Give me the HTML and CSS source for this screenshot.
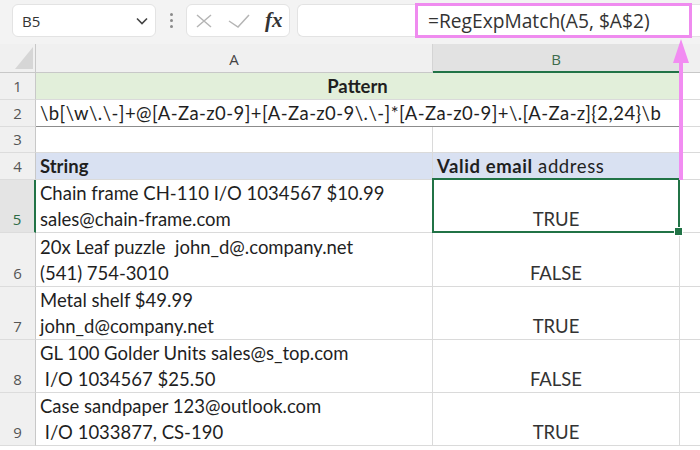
FILE: index.html
```html
<!DOCTYPE html>
<html lang="en">
<head>
    <meta charset="UTF-8">
    <title>RegExpMatch - Valid email</title>
    <link rel="stylesheet" href="styles.css">
</head>
<body>

<div class="toolbar">
    <div class="namebox">
        <span>B5</span>
        <svg width="12" height="8" viewBox="0 0 12 8"><path d="M1 1.5 L6 6.5 L11 1.5" fill="none" stroke="#444" stroke-width="1.6"/></svg>
    </div>
    <div class="grip"><i></i><i></i><i></i></div>
    <div class="fnbox">
        <svg width="18" height="14" viewBox="0 0 18 14"><path d="M2 1 L16 13 M16 1 L2 13" stroke="#b5b5b5" stroke-width="1.5" fill="none"/></svg>
        <svg width="22" height="14" viewBox="0 0 22 14"><path d="M1 7 L10 13 L21 1" stroke="#b5b5b5" stroke-width="1.5" fill="none"/></svg>
        <span class="fx">fx</span>
    </div>
    <div class="formula">
        <span class="formula-text">=RegExpMatch(A5, $A$2)</span>
    </div>
</div>

<div class="sheet">
    <!-- column headers -->
    <div class="corner"><svg width="18" height="22" viewBox="0 0 18 22"><polygon points="18,0 18,22 0,22" fill="#d6d6d6"/></svg></div>
    <div class="hdr">A</div>
    <div class="hdr hdr-sel">B</div>
    <div class="hdr hdr-c"></div>

    <!-- row 1 -->
    <div class="rh">1</div>
    <div class="c merged title">Pattern</div>
    <div class="c cc"></div>

    <!-- row 2 -->
    <div class="rh">2</div>
    <div class="c merged pattern">\b[\w\.\-]+@[A-Za-z0-9]+[A-Za-z0-9\.\-]*[A-Za-z0-9]+\.[A-Za-z]{2,24}\b</div>
    <div class="c cc"></div>

    <!-- row 3 -->
    <div class="rh">3</div>
    <div class="c"></div>
    <div class="c"></div>
    <div class="c cc"></div>

    <!-- row 4 -->
    <div class="rh">4</div>
    <div class="c head"><b>String</b></div>
    <div class="c head"><span><b>Valid email</b> address</span></div>
    <div class="c cc"></div>

    <!-- data rows -->
    <div class="rh rh-sel">5</div>
    <div class="c">Chain frame CH-110 I/O 1034567 $10.99<br>sales@chain-frame.com</div>
    <div class="c res sel">TRUE</div>
    <div class="c cc"></div>

    <div class="rh">6</div>
    <div class="c">20x Leaf puzzle&nbsp; john_d@.company.net<br>(541) 754-3010</div>
    <div class="c res">FALSE</div>
    <div class="c cc"></div>

    <div class="rh">7</div>
    <div class="c">Metal shelf $49.99<br>john_d@company.net</div>
    <div class="c res">TRUE</div>
    <div class="c cc"></div>

    <div class="rh">8</div>
    <div class="c">GL 100 Golder Units sales@s_top.com<br>&nbsp;I/O 1034567 $25.50</div>
    <div class="c res">FALSE</div>
    <div class="c cc"></div>

    <div class="rh">9</div>
    <div class="c">Case sandpaper 123@outlook.com<br>&nbsp;I/O 1033877, CS-190</div>
    <div class="c res">TRUE</div>
    <div class="c cc"></div>
</div>

<!-- callout arrow from the result column up to the formula -->
<svg class="arrow" width="18" height="144" viewBox="0 0 18 144">
    <polygon points="9,1 1,25 17,25" fill="#f28cf2"/>
    <rect x="7" y="24" width="4" height="118" fill="#f28cf2"/>
</svg>

</body>
</html>
```

FILE: styles.css
```css
* {
    box-sizing: border-box;
}

body {
    margin: 0;
    width: 700px;
    height: 450px;
    overflow: hidden;
    background: #fff;
    font-family: 'Lato', sans-serif;
    color: #1f1f1f;
    position: relative;
}

/* Formula bar */
.toolbar {
    height: 44px;
    background: #f3f3f3;
    display: flex;
    align-items: flex-start;
    padding: 4px 0 0 12px;
}

.namebox {
    width: 144px;
    height: 33px;
    background: #fff;
    border: 1px solid #e3e3e3;
    border-radius: 6px;
    display: flex;
    align-items: center;
    justify-content: space-between;
    padding: 0 7px 0 9px;
    font-family: 'Open Sans', sans-serif;
    font-size: 15px;
    color: #333;
}

.grip {
    width: 30px;
    height: 33px;
    display: flex;
    flex-direction: column;
    align-items: center;
    justify-content: center;
    gap: 3px;
}

.grip i {
    width: 3px;
    height: 3px;
    border-radius: 50%;
    background: #8a8a8a;
}

.fnbox {
    width: 104px;
    height: 33px;
    background: #fff;
    border: 1px solid #e3e3e3;
    border-radius: 6px;
    display: flex;
    align-items: center;
    gap: 15px;
    padding-left: 8px;
}

.fx {
    font-family: 'Liberation Serif', serif;
    font-style: italic;
    font-weight: bold;
    font-size: 21px;
    color: #333;
}

.formula {
    flex: 1;
    height: 33px;
    margin-left: 7px;
    background: #fff;
    border: 1px solid #e3e3e3;
    border-right: none;
    border-radius: 6px 0 0 6px;
    display: flex;
    justify-content: flex-end;
}

.formula-text {
    width: 277px;
    margin: -2px 8px -2px 0;
    border: 3px solid #ef8bef;
    padding-left: 10px;
    display: flex;
    align-items: center;
    font-family: 'Open Sans', sans-serif;
    font-size: 19.2px;
    color: #333;
}

/* Sheet grid */
.sheet {
    display: grid;
    grid-template-columns: 36px 397px 247px 20px;
    grid-template-rows: 29px 27px 27px 26px 27px 53px 54px 53px 53px 53px;
}

.corner {
    background: #f0f0f0;
    border-right: 1px solid #c8c8c8;
    border-bottom: 1px solid #c8c8c8;
    padding: 3px 0 0 15px;
}

.hdr {
    background: #f0f0f0;
    border-right: 1px solid #d4d4d4;
    border-bottom: 1px solid #c8c8c8;
    display: flex;
    align-items: center;
    justify-content: center;
    padding-top: 2px;
    font-family: 'Open Sans', sans-serif;
    font-size: 15px;
    color: #444;
}

.hdr-sel {
    background: #e2e2e2;
    color: #3d6b4c;
    border-bottom: 2px solid #217346;
}

.hdr-c {
    border-right: none;
}

.rh {
    background: #f0f0f0;
    border-right: 1px solid #c8c8c8;
    border-bottom: 1px solid #dcdcdc;
    display: flex;
    align-items: flex-end;
    justify-content: center;
    font-family: 'Open Sans', sans-serif;
    font-size: 15px;
    line-height: 26px;
    color: #555;
}

.rh-sel {
    background: #e4e4e4;
    color: #2d6b45;
    border-right: 2px solid #217346;
}

.c {
    border-right: 1px solid #dadada;
    border-bottom: 1px solid #dadada;
    display: flex;
    flex-direction: column;
    justify-content: flex-end;
    padding: 0 4px;
    font-size: 18.5px;
    line-height: 26px;
    white-space: nowrap;
}

.cc {
    border-right: none;
}

.merged {
    grid-column: span 2;
}

.title {
    background: #e2efda;
    align-items: center;
    font-weight: bold;
    border-right-color: #8f9a8f;
}

.pattern {
    letter-spacing: 0.45px;
    border-right-color: #8c8c8c;
    border-bottom-color: #8c8c8c;
}

.head {
    background: #d9e1f2;
}

.head span {
    letter-spacing: 0.6px;
}

.res {
    align-items: center;
    color: #333;
}

.sel {
    position: relative;
}

.sel::after {
    content: '';
    position: absolute;
    top: -2px;
    left: -1px;
    right: -1px;
    bottom: -1px;
    border: 2px solid #217346;
}

.sel::before {
    content: '';
    position: absolute;
    right: -4px;
    bottom: -4px;
    width: 7px;
    height: 7px;
    background: #217346;
    border: 1px solid #fff;
    z-index: 1;
}

.arrow {
    position: absolute;
    left: 672px;
    top: 38px;
}
```
